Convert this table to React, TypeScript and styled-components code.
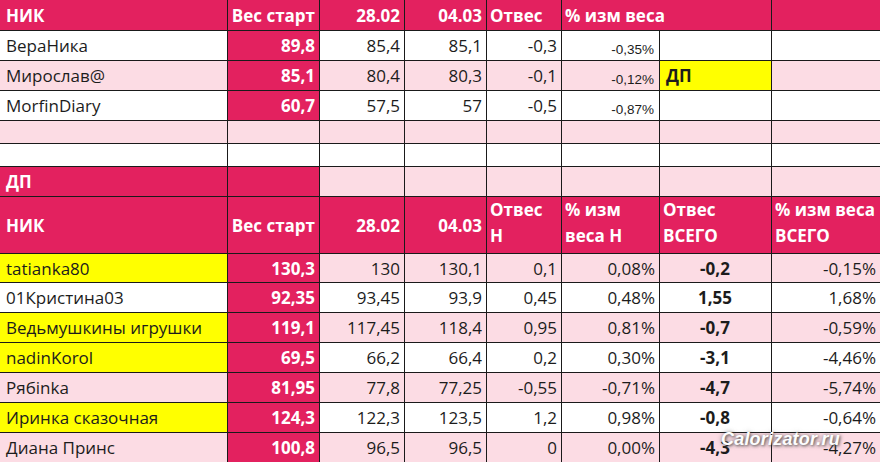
import React from "react";
import styled, { createGlobalStyle } from "styled-components";

type Tone = "pink" | "light" | "white" | "yellow";

const tones: Record<Tone, string> = {
  pink: "#e3215f",
  light: "#fcdce4",
  white: "#ffffff",
  yellow: "#ffff00",
};

const GlobalStyle = createGlobalStyle`
  html, body {
    margin: 0;
    padding: 0;
    background: #fff;
  }
  body {
    font-family: "Open Sans", "Noto Sans", sans-serif;
  }
`;

/* ─── Styled Components ─── */

const Sheet = styled.div`
  position: relative;
  width: 880px;
  height: 462px;
  overflow: hidden;
  display: flex;
  flex-direction: column;
  gap: 1px;
  background: #1a1a1a;
`;

const Row = styled.div<{ $h: number }>`
  display: grid;
  grid-template-columns: 227px 91px 84px 81px 74px 97px 111px 1fr;
  gap: 1px;
  height: ${(p) => p.$h}px;
  flex-shrink: 0;
`;

const Cell = styled.div<{
  $tone: Tone;
  $align?: "left" | "right" | "center";
  $valign?: "top" | "center" | "bottom";
  $bold?: boolean;
  $light?: boolean;
  $span?: number;
  $pad?: number;
}>`
  background: ${(p) => tones[p.$tone]};
  grid-column: ${(p) => (p.$span ? `span ${p.$span}` : "auto")};
  display: flex;
  align-items: ${(p) =>
    p.$valign === "top" ? "flex-start" : p.$valign === "bottom" ? "flex-end" : "center"};
  justify-content: ${(p) =>
    p.$align === "right" ? "flex-end" : p.$align === "center" ? "center" : "flex-start"};
  padding: 0 4px 0 ${(p) => p.$pad ?? 3}px;
  font-size: 17px;
  font-weight: ${(p) => (p.$bold ? 700 : 400)};
  color: ${(p) => (p.$light ? "#fff" : "#1c1c1c")};
  white-space: nowrap;
  min-width: 0;
`;

const SmallPct = styled.span`
  font-family: "Liberation Sans", Arial, sans-serif;
  font-size: 13.5px;
  padding-bottom: 3px;
  padding-right: 1px;
`;

const HeadStack = styled.div`
  line-height: 26px;
  white-space: normal;
`;

const Watermark = styled.div`
  position: absolute;
  left: 721px;
  top: 429px;
  font-family: "Liberation Sans", Arial, sans-serif;
  font-size: 18px;
  font-weight: 700;
  font-style: italic;
  color: #fdfdfd;
  letter-spacing: 0.2px;
  text-shadow: 1px 1px 3px rgba(60, 60, 60, 0.8), 0 0 5px rgba(90, 90, 90, 0.6);
  pointer-events: none;
`;

/* ─── Data ─── */

const topRows = [
  { name: "ВераНика", tone: "white" as Tone, start: "89,8", d1: "85,4", d2: "85,1", loss: "-0,3", pct: "-0,35%", dp: false },
  { name: "Мирослав@", tone: "light" as Tone, start: "85,1", d1: "80,4", d2: "80,3", loss: "-0,1", pct: "-0,12%", dp: true },
  { name: "MorfinDiary", tone: "white" as Tone, start: "60,7", d1: "57,5", d2: "57", loss: "-0,5", pct: "-0,87%", dp: false },
];

const groupRows = [
  { name: "tatianka80", hl: true, tone: "light" as Tone, start: "130,3", d1: "130", d2: "130,1", n: "0,1", np: "0,08%", all: "-0,2", ap: "-0,15%" },
  { name: "01Кристина03", hl: false, tone: "white" as Tone, start: "92,35", d1: "93,45", d2: "93,9", n: "0,45", np: "0,48%", all: "1,55", ap: "1,68%" },
  { name: "Ведьмушкины игрушки", hl: true, tone: "light" as Tone, start: "119,1", d1: "117,45", d2: "118,4", n: "0,95", np: "0,81%", all: "-0,7", ap: "-0,59%" },
  { name: "nadinKorol", hl: true, tone: "white" as Tone, start: "69,5", d1: "66,2", d2: "66,4", n: "0,2", np: "0,30%", all: "-3,1", ap: "-4,46%" },
  { name: "Рябinka", hl: false, tone: "light" as Tone, start: "81,95", d1: "77,8", d2: "77,25", n: "-0,55", np: "-0,71%", all: "-4,7", ap: "-5,74%" },
  { name: "Иринка сказочная", hl: true, tone: "white" as Tone, start: "124,3", d1: "122,3", d2: "123,5", n: "1,2", np: "0,98%", all: "-0,8", ap: "-0,64%" },
  { name: "Диана Принс", hl: false, tone: "light" as Tone, start: "100,8", d1: "96,5", d2: "96,5", n: "0", np: "0,00%", all: "-4,3", ap: "-4,27%" },
];

const EmptyRow: React.FC<{ tone: Tone }> = ({ tone }) => (
  <Row $h={22}>
    {Array.from({ length: 8 }).map((_, i) => (
      <Cell key={i} $tone={tone} />
    ))}
  </Row>
);

/* ─── Component ─── */

const App: React.FC = () => {
  return (
    <>
      <GlobalStyle />
      <Sheet>
        <Row $h={30}>
          <Cell $tone="pink" $bold $light $pad={6}>НИК</Cell>
          <Cell $tone="pink" $bold $light $align="right">Вес старт</Cell>
          <Cell $tone="pink" $bold $light $align="right">28.02</Cell>
          <Cell $tone="pink" $bold $light $align="right">04.03</Cell>
          <Cell $tone="pink" $bold $light>Отвес</Cell>
          <Cell $tone="pink" $bold $light $span={2}>% изм веса</Cell>
          <Cell $tone="pink" />
        </Row>

        {topRows.map((r) => (
          <Row $h={29} key={r.name}>
            <Cell $tone={r.tone} $pad={6}>{r.name}</Cell>
            <Cell $tone="pink" $bold $light $align="right">{r.start}</Cell>
            <Cell $tone={r.tone} $align="right">{r.d1}</Cell>
            <Cell $tone={r.tone} $align="right">{r.d2}</Cell>
            <Cell $tone={r.tone} $align="right">{r.loss}</Cell>
            <Cell $tone={r.tone} $align="right" $valign="bottom">
              <SmallPct>{r.pct}</SmallPct>
            </Cell>
            {r.dp ? (
              <Cell $tone="yellow" $bold $pad={6}>ДП</Cell>
            ) : (
              <Cell $tone={r.tone} />
            )}
            <Cell $tone={r.tone} />
          </Row>
        ))}

        <EmptyRow tone="light" />
        <EmptyRow tone="white" />

        <Row $h={29}>
          <Cell $tone="pink" $bold $light $pad={6}>ДП</Cell>
          <Cell $tone="pink" />
          {Array.from({ length: 6 }).map((_, i) => (
            <Cell key={i} $tone="light" />
          ))}
        </Row>

        <Row $h={56}>
          <Cell $tone="pink" $bold $light $pad={6}>НИК</Cell>
          <Cell $tone="pink" $bold $light $align="right">Вес старт</Cell>
          <Cell $tone="pink" $bold $light $align="right">28.02</Cell>
          <Cell $tone="pink" $bold $light $align="right">04.03</Cell>
          <Cell $tone="pink" $bold $light $valign="top">
            <HeadStack>Отвес<br />Н</HeadStack>
          </Cell>
          <Cell $tone="pink" $bold $light $valign="top">
            <HeadStack>% изм<br />веса Н</HeadStack>
          </Cell>
          <Cell $tone="pink" $bold $light $valign="top">
            <HeadStack>Отвес<br />ВСЕГО</HeadStack>
          </Cell>
          <Cell $tone="pink" $bold $light $valign="top">
            <HeadStack>% изм веса<br />ВСЕГО</HeadStack>
          </Cell>
        </Row>

        {groupRows.map((r, i) => (
          <Row $h={i === 0 ? 28 : 29} key={r.name}>
            <Cell $tone={r.hl ? "yellow" : r.tone} $pad={6}>{r.name}</Cell>
            <Cell $tone="pink" $bold $light $align="right">{r.start}</Cell>
            <Cell $tone={r.tone} $align="right">{r.d1}</Cell>
            <Cell $tone={r.tone} $align="right">{r.d2}</Cell>
            <Cell $tone={r.tone} $align="right">{r.n}</Cell>
            <Cell $tone={r.tone} $align="right">{r.np}</Cell>
            <Cell $tone={r.tone} $align="center" $bold>{r.all}</Cell>
            <Cell $tone={r.tone} $align="right">{r.ap}</Cell>
          </Row>
        ))}

        <Watermark>Calorizator.ru</Watermark>
      </Sheet>
    </>
  );
};

export default App;
